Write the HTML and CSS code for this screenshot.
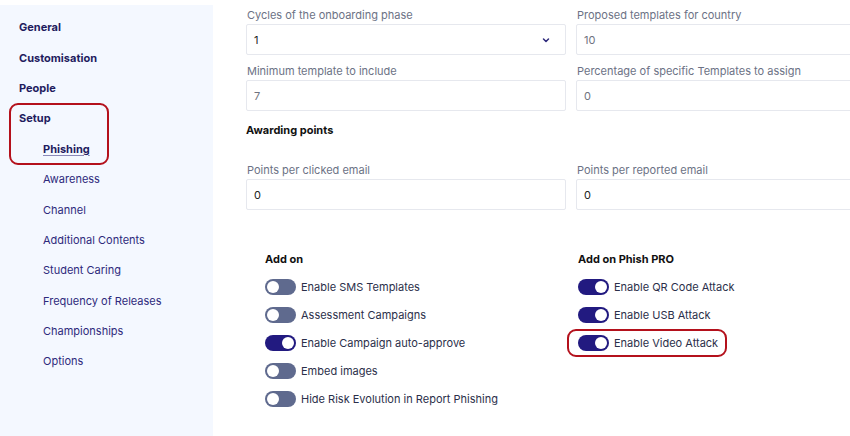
FILE: index.html
```html
<!DOCTYPE html>
<html lang="en">
<head>
    <meta charset="UTF-8">
    <meta name="viewport" content="width=device-width, initial-scale=1.0">
    <title>Setup - Phishing</title>
    <link rel="stylesheet" href="styles.css">
</head>
<body>
    <div class="page">
        <aside class="sidebar">
            <a class="nav-item top">General</a>
            <a class="nav-item top">Customisation</a>
            <a class="nav-item top">People</a>
            <div class="nav-group marked">
                <a class="nav-item top">Setup</a>
                <a class="nav-item sub active">Phishing</a>
            </div>
            <a class="nav-item sub">Awareness</a>
            <a class="nav-item sub">Channel</a>
            <a class="nav-item sub">Additional Contents</a>
            <a class="nav-item sub">Student Caring</a>
            <a class="nav-item sub">Frequency of Releases</a>
            <a class="nav-item sub">Championships</a>
            <a class="nav-item sub">Options</a>
        </aside>

        <main class="content">
            <div class="form-grid">
                <div class="field">
                    <label>Cycles of the onboarding phase</label>
                    <div class="input select">
                        <span class="value">1</span>
                        <svg class="chevron" width="10" height="10" viewBox="0 0 10 10" fill="none" stroke="currentColor" stroke-width="1.5" stroke-linecap="round" stroke-linejoin="round">
                            <polyline points="2.5 4 5 6.5 7.5 4"></polyline>
                        </svg>
                    </div>
                </div>
                <div class="field">
                    <label>Proposed templates for country</label>
                    <div class="input"><span class="value muted">10</span></div>
                </div>
                <div class="field">
                    <label>Minimum template to include</label>
                    <div class="input"><span class="value muted">7</span></div>
                </div>
                <div class="field">
                    <label>Percentage of specific Templates to assign</label>
                    <div class="input"><span class="value muted">0</span></div>
                </div>
            </div>

            <h3 class="section-title awarding">Awarding points</h3>

            <div class="form-grid">
                <div class="field">
                    <label>Points per clicked email</label>
                    <div class="input"><span class="value">0</span></div>
                </div>
                <div class="field">
                    <label>Points per reported email</label>
                    <div class="input"><span class="value">0</span></div>
                </div>
            </div>

            <div class="addons">
                <div class="addon-col">
                    <h3 class="section-title">Add on</h3>
                    <div class="toggle-row"><span class="toggle"></span>Enable SMS Templates</div>
                    <div class="toggle-row"><span class="toggle"></span>Assessment Campaigns</div>
                    <div class="toggle-row"><span class="toggle on"></span>Enable Campaign auto-approve</div>
                    <div class="toggle-row"><span class="toggle"></span>Embed images</div>
                    <div class="toggle-row"><span class="toggle"></span>Hide Risk Evolution in Report Phishing</div>
                </div>
                <div class="addon-col">
                    <h3 class="section-title">Add on Phish PRO</h3>
                    <div class="toggle-row"><span class="toggle on"></span>Enable QR Code Attack</div>
                    <div class="toggle-row"><span class="toggle on"></span>Enable USB Attack</div>
                    <div class="toggle-row marked"><span class="toggle on"></span>Enable Video Attack</div>
                </div>
            </div>
        </main>
    </div>
</body>
</html>
```

FILE: styles.css
```css
* {
    margin: 0;
    padding: 0;
    box-sizing: border-box;
}

body {
    font-family: Inter, "Noto Sans", Arial, sans-serif;
    font-size: 11px;
    background: #fff;
    color: #2b2f4a;
    overflow: hidden;
}

.page {
    display: flex;
    height: 436px;
    padding-top: 5px;
}

/* sidebar */
.sidebar {
    width: 213px;
    flex-shrink: 0;
    background: #f4f8ff;
    padding-top: 7px;
    display: flex;
    flex-direction: column;
}

.nav-item {
    display: flex;
    align-items: center;
    height: 30.4px;
    font-size: 11px;
    color: #2e2a7c;
    text-decoration: none;
}

.nav-item.top {
    padding-left: 19px;
    font-weight: 700;
    color: #1f1c5e;
}

.nav-item.sub {
    padding-left: 43px;
}

.nav-item.active {
    font-weight: 700;
    color: #1f1c5e;
    text-decoration: underline;
    text-decoration-color: #8b89b8;
    text-underline-offset: 2px;
}

.nav-group {
    display: flex;
    flex-direction: column;
}

/* red highlight frame */
.marked {
    position: relative;
}

.marked::after {
    content: '';
    position: absolute;
    border: 2.5px solid #b4111c;
    border-radius: 9px;
    pointer-events: none;
}

.nav-group.marked::after {
    top: 0;
    bottom: -1px;
    left: 9px;
    width: 96px;
}

.toggle-row.marked::after {
    top: 0;
    bottom: 0;
    left: -11px;
    right: -9px;
}

/* main content */
.content {
    padding: 2px 0 0 33px;
    flex: 1;
}

.form-grid {
    display: grid;
    grid-template-columns: 320px 320px;
    column-gap: 10px;
    row-gap: 8px;
}

.field label {
    display: block;
    line-height: 16px;
    margin-bottom: 1px;
    padding-left: 1px;
    color: #6c7285;
}

.input {
    height: 31px;
    border: 1px solid #e6e8ee;
    border-radius: 2px;
    display: flex;
    align-items: center;
    justify-content: space-between;
    padding: 0 14px 0 7px;
}

.value {
    color: #222;
}

.value.muted {
    color: #6f7380;
}

.chevron {
    color: #2e2a7c;
}

.section-title {
    font-size: 11px;
    font-weight: 700;
    color: #111;
    line-height: 16px;
}

.section-title.awarding {
    margin: 11px 0 24px;
}

.addons {
    display: grid;
    grid-template-columns: 313px auto;
    padding-left: 19px;
    margin-top: 41px;
}

.addon-col .section-title {
    margin-bottom: 6px;
}

.toggle-row {
    display: flex;
    align-items: center;
    gap: 5px;
    height: 28px;
    width: max-content;
    color: #2b2f4a;
}

.toggle {
    position: relative;
    width: 31px;
    height: 16px;
    border-radius: 8px;
    background: #5f6a8e;
}

.toggle::before {
    content: '';
    position: absolute;
    top: 2px;
    left: 2px;
    width: 12px;
    height: 12px;
    border-radius: 50%;
    background: #fff;
}

.toggle.on {
    background: #221a80;
}

.toggle.on::before {
    left: 17px;
}
```
